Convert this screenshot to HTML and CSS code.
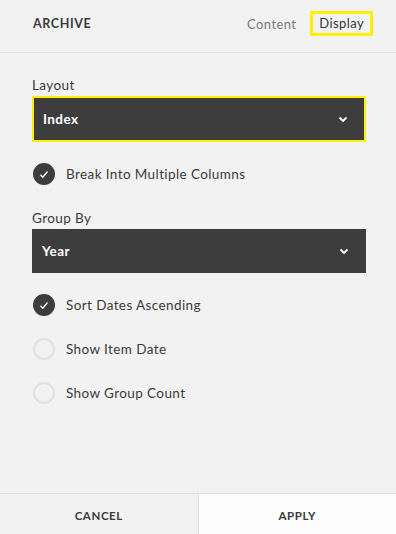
FILE: index.html
```html
<!DOCTYPE html>
<html>
<head>
<meta charset="utf-8">
<link rel="stylesheet" href="styles.css">
</head>
<body>
<div class="panel">
  <header class="head">
    <div class="title">ARCHIVE</div>
    <nav class="tabs">
      <span class="tab">Content</span>
      <span class="tab active">Display</span>
    </nav>
  </header>
  <main class="body">
    <div class="field">
      <div class="label">Layout</div>
      <div class="select focused"><span>Index</span>
        <svg class="chev" width="10" height="7" viewBox="0 0 10 7"><path d="M1.5 1.5 L5 5 L8.5 1.5" fill="none" stroke="#fff" stroke-width="1.8"/></svg>
      </div>
    </div>
    <div class="check on"><span class="box"><svg width="10" height="9" viewBox="0 0 10 9"><path d="M1.5 4.8 L3.8 7.2 L8.5 1.5" fill="none" stroke="#fff" stroke-width="1.3"/></svg></span>Break Into Multiple Columns</div>
    <div class="field grp">
      <div class="label">Group By</div>
      <div class="select"><span>Year</span>
        <svg class="chev" width="10" height="7" viewBox="0 0 10 7"><path d="M1.5 1.5 L5 5 L8.5 1.5" fill="none" stroke="#fff" stroke-width="1.8"/></svg>
      </div>
    </div>
    <div class="check on"><span class="box"><svg width="10" height="9" viewBox="0 0 10 9"><path d="M1.5 4.8 L3.8 7.2 L8.5 1.5" fill="none" stroke="#fff" stroke-width="1.3"/></svg></span>Sort Dates Ascending</div>
    <div class="check"><span class="box"></span>Show Item Date</div>
    <div class="check"><span class="box"></span>Show Group Count</div>
  </main>
  <footer class="foot">
    <div class="btn cancel">CANCEL</div>
    <div class="btn apply">APPLY</div>
  </footer>
</div>
</body>
</html>
```
FILE: styles.css
```css
* { box-sizing: border-box; }
html, body { margin: 0; padding: 0; }
body {
  width: 396px;
  height: 534px;
  background: #f2f2f2;
  font-family: Lato, "Open Sans", sans-serif;
  color: #3a3a3a;
  overflow: hidden;
}
.panel {
  height: 534px;
  display: flex;
  flex-direction: column;
}
.head {
  height: 53px;
  border-bottom: 1px solid #e0e0e0;
  display: flex;
  align-items: center;
  justify-content: space-between;
  padding: 0 23px 5px 33px;
}
.title {
  font-size: 12.5px;
  font-weight: 700;
  letter-spacing: 0.6px;
  color: #3a3a3a;
}
.tabs { display: flex; gap: 14px; align-items: center; }
.tab {
  font-size: 13px;
  letter-spacing: 0.4px;
  color: #7a7a7a;
}
.tab.active {
  color: #333;
  border: 3px solid #ffef00;
  padding: 1px 6px 2px;
}
.body {
  flex: 1;
  padding: 24px 30px 0 32px;
}
.label {
  font-size: 13.5px;
  letter-spacing: 0.4px;
  color: #3a3a3a;
  line-height: 16px;
  margin-bottom: 3px;
}
.select {
  height: 44px;
  background: #3d3d3d;
  color: #fff;
  display: flex;
  align-items: center;
  justify-content: space-between;
  padding: 0 17px 0 10px;
  font-size: 13.5px;
  font-weight: 700;
  letter-spacing: 0.4px;
}
.select.focused {
  height: 46px;
  border: 2px solid #ffef00;
  padding-left: 9px;
  padding-right: 16px;
}
.chev { display: block; }
.check {
  display: flex;
  align-items: center;
  gap: 11px;
  font-size: 13.5px;
  letter-spacing: 0.4px;
  color: #3a3a3a;
  height: 22px;
  margin-top: 22px;
}
.check.on { margin-top: 21px; }
.box {
  width: 22px;
  height: 22px;
  border-radius: 50%;
  border: 2px solid #e2e2e2;
  display: flex;
  align-items: center;
  justify-content: center;
  flex: none;
  margin-left: 1px;
}
.check.on .box { background: #3d3d3d; border-color: #3d3d3d; }
.grp { margin-top: 25px; }
.foot {
  height: 41px;
  border-top: 1px solid #e0e0e0;
  display: flex;
}
.btn {
  flex: 1;
  display: flex;
  align-items: center;
  justify-content: center;
  font-size: 11.5px;
  font-weight: 700;
  letter-spacing: 0.6px;
  color: #3a3a3a;
  padding-top: 2px;
}
.cancel { background: #f2f2f2; border-right: 1px solid #e0e0e0; }
.apply { background: #fdfdfd; }
```
